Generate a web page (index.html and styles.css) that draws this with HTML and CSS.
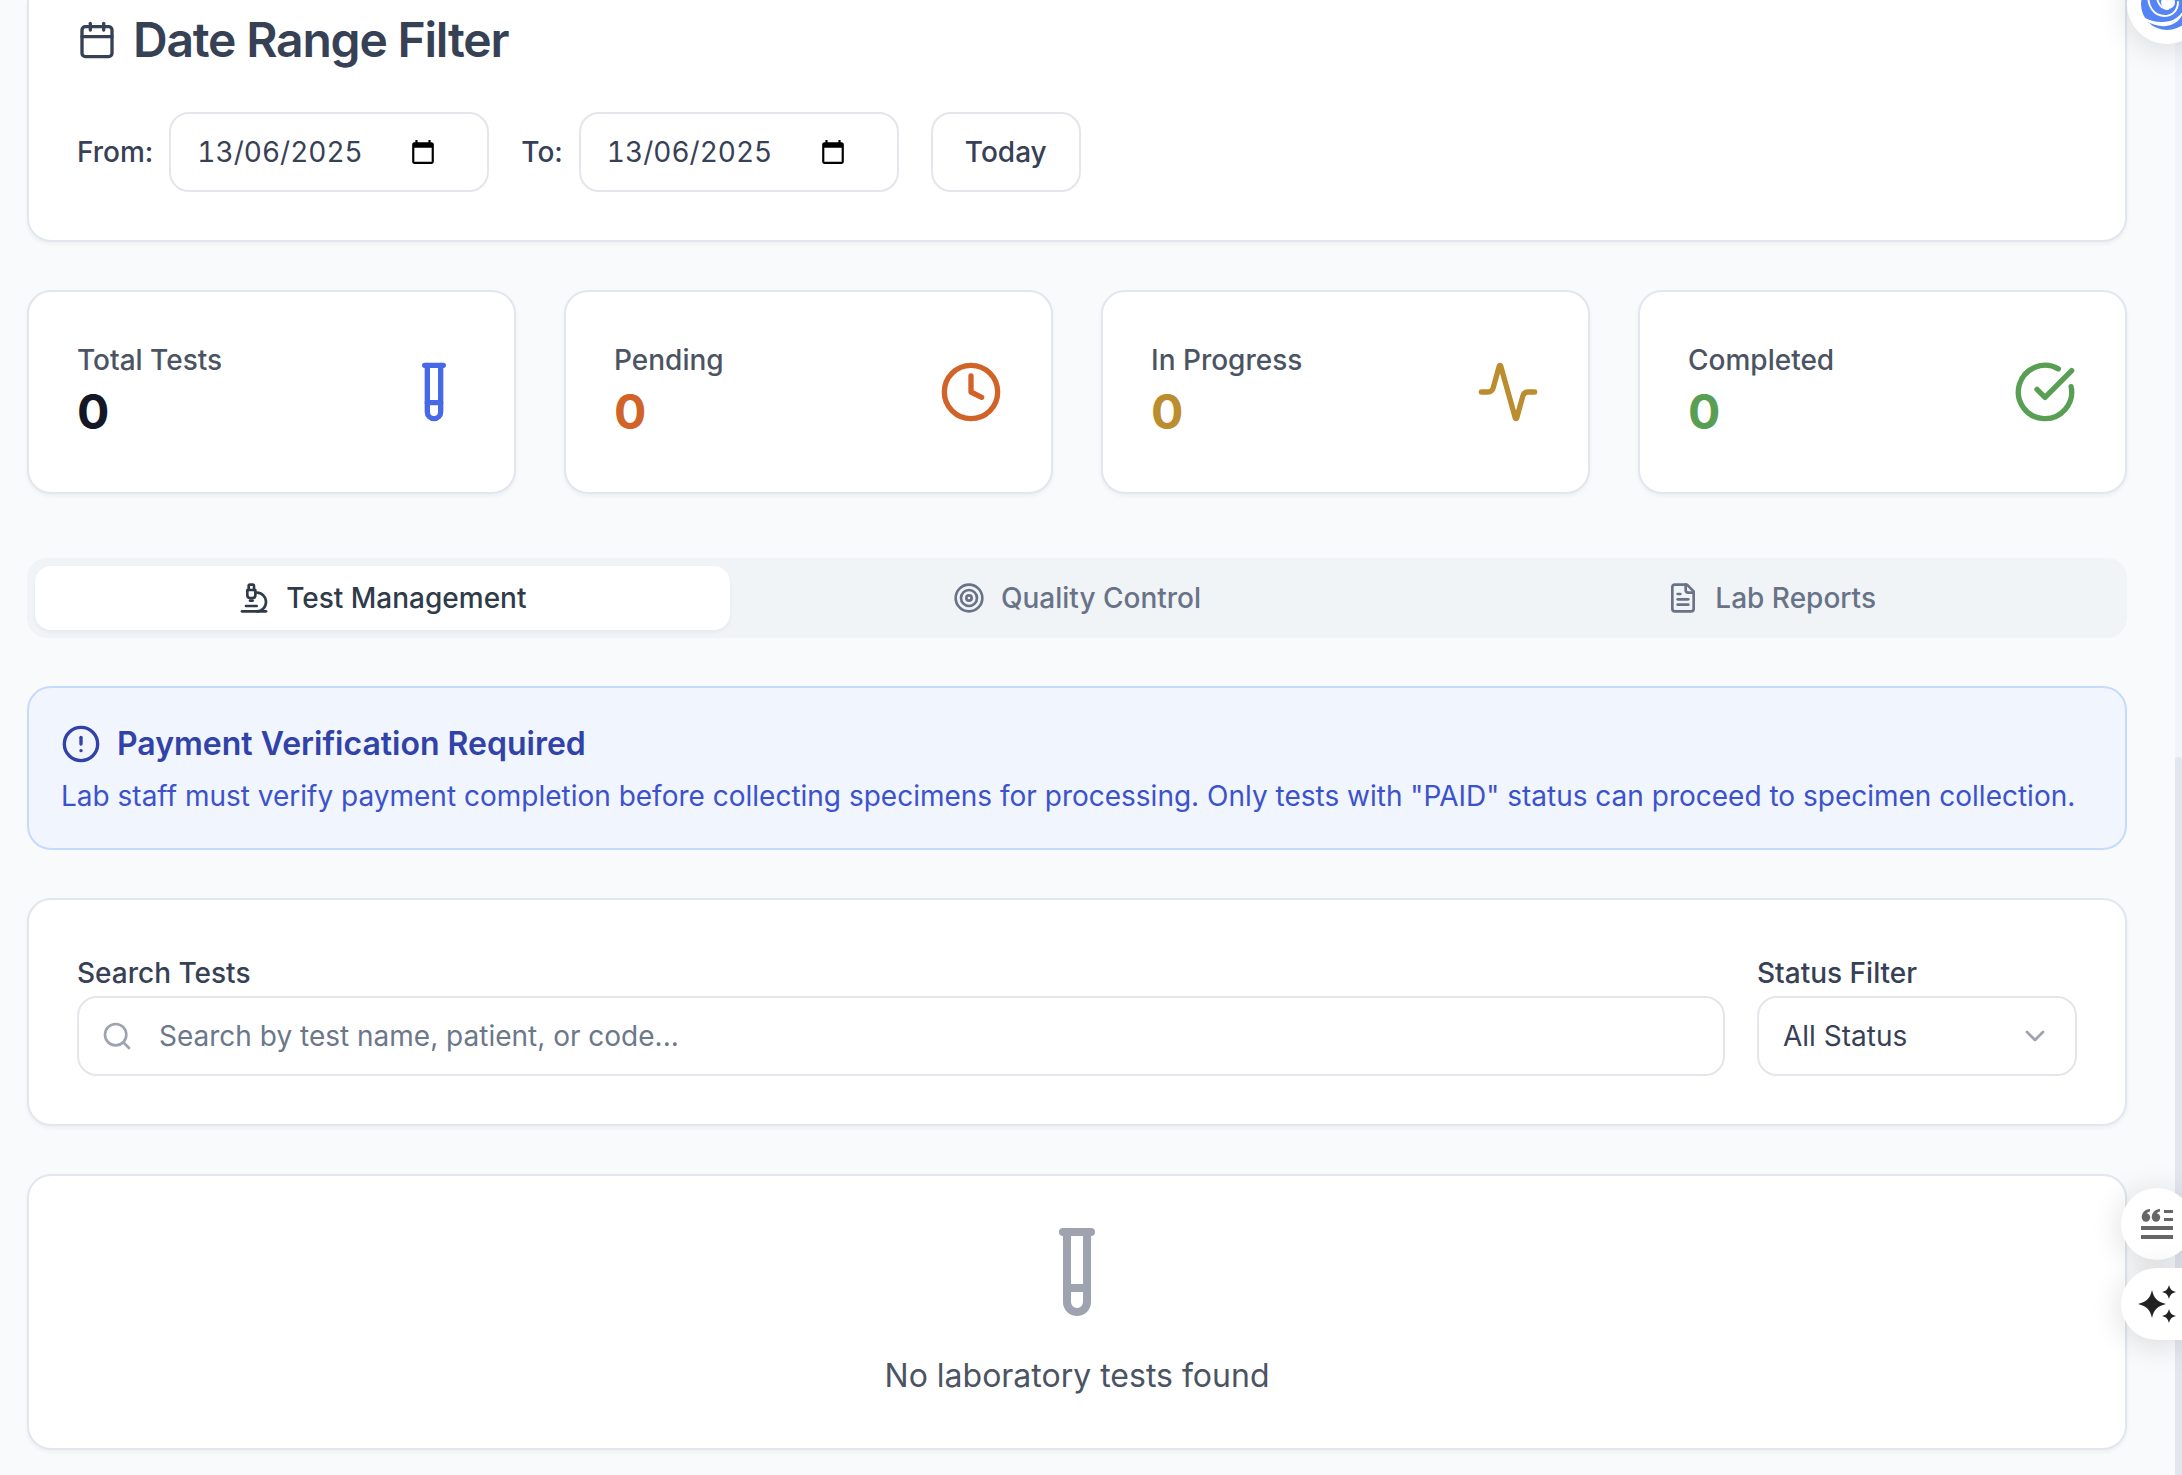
FILE: index.html
```html
<!DOCTYPE html>
<html lang="en-GB">
<head>
<meta charset="utf-8">
<meta name="viewport" content="width=device-width, initial-scale=1">
<title>Laboratory</title>
<link rel="stylesheet" href="styles.css">
</head>
<body>
<svg class="sprite" aria-hidden="true">
  <symbol id="tube" viewBox="0 0 24 24"><path d="M14.5 2v17.5c0 1.4-1.1 2.5-2.5 2.5s-2.5-1.1-2.5-2.5V2"/><path d="M8.5 2h7"/><path d="M14.5 16h-5"/></symbol>
  <symbol id="picker" viewBox="0 0 24 24"><path d="M20 3h-1V1h-2v2H7V1H5v2H4c-1.1 0-2 .9-2 2v16c0 1.1.9 2 2 2h16c1.100 0 2-.9 2-2V5c0-1.100-.9-2-2-2zm0 18H4V8h16v13z"/></symbol>
</svg>

<main class="page">
  <section class="card card-filter">
    <h2 class="card-title">
      <svg class="icon icon-lg" viewBox="0 0 24 24"><path d="M8 2v4"/><path d="M16 2v4"/><rect x="3" y="4" width="18" height="18" rx="2"/><path d="M3 10h18"/></svg>
      Date Range Filter
    </h2>
    <div class="filter-row">
      <div class="field-inline">
        <label for="from">From:</label>
        <div class="control control-date">
          <input id="from" type="text" inputmode="numeric" value="13/06/2025">
          <button type="button" class="picker" aria-label="Open calendar"><svg viewBox="0 0 24 24"><use href="#picker"/></svg></button>
        </div>
      </div>
      <div class="field-inline">
        <label for="to">To:</label>
        <div class="control control-date">
          <input id="to" type="text" inputmode="numeric" value="13/06/2025">
          <button type="button" class="picker" aria-label="Open calendar"><svg viewBox="0 0 24 24"><use href="#picker"/></svg></button>
        </div>
      </div>
      <button type="button" class="button">Today</button>
    </div>
  </section>

  <section class="stats">
    <article class="card stat">
      <div><p class="stat-label">Total Tests</p><p class="stat-value">0</p></div>
      <svg class="icon icon-xl blue" viewBox="0 0 24 24"><use href="#tube"/></svg>
    </article>
    <article class="card stat">
      <div><p class="stat-label">Pending</p><p class="stat-value orange">0</p></div>
      <svg class="icon icon-xl orange" viewBox="0 0 24 24"><circle cx="12" cy="12" r="10"/><path d="M12 6v6l4 2"/></svg>
    </article>
    <article class="card stat">
      <div><p class="stat-label">In Progress</p><p class="stat-value yellow">0</p></div>
      <svg class="icon icon-xl yellow" viewBox="0 0 24 24"><path d="M22 12h-2.480a2 2 0 0 0-1.930 1.460l-2.350 8.360a.25.25 0 0 1-.48 0L9.240 2.180a.25.25 0 0 0-.48 0l-2.350 8.360A2 2 0 0 1 4.490 12H2"/></svg>
    </article>
    <article class="card stat">
      <div><p class="stat-label">Completed</p><p class="stat-value green">0</p></div>
      <svg class="icon icon-xl green" viewBox="0 0 24 24"><path d="M21.801 10A10 10 0 1 1 17 3.335"/><path d="m9 11 3 3L22 4"/></svg>
    </article>
  </section>

  <div class="tabs" role="tablist">
    <button type="button" class="tab tab-active" role="tab" aria-selected="true">
      <svg class="icon" viewBox="0 0 24 24"><path d="M6 18h8"/><path d="M3 22h18"/><path d="M14 22a7 7 0 1 0 0-14h-1"/><path d="M9 14h2"/><path d="M9 12a2 2 0 0 1-2-2V6h6v4a2 2 0 0 1-2 2Z"/><path d="M12 6V3a1 1 0 0 0-1-1H9a1 1 0 0 0-1 1v3"/></svg>
      Test Management
    </button>
    <button type="button" class="tab" role="tab" aria-selected="false">
      <svg class="icon" viewBox="0 0 24 24"><circle cx="12" cy="12" r="10"/><circle cx="12" cy="12" r="6"/><circle cx="12" cy="12" r="2"/></svg>
      Quality Control
    </button>
    <button type="button" class="tab" role="tab" aria-selected="false">
      <svg class="icon" viewBox="0 0 24 24"><path d="M15 2H6a2 2 0 0 0-2 2v16a2 2 0 0 0 2 2h12a2 2 0 0 0 2-2V7Z"/><path d="M14 2v4a2 2 0 0 0 2 2h4"/><path d="M10 9H8"/><path d="M16 13H8"/><path d="M16 17H8"/></svg>
      Lab Reports
    </button>
  </div>

  <section class="notice">
    <h3 class="notice-title">
      <svg class="icon icon-lg" viewBox="0 0 24 24"><circle cx="12" cy="12" r="10"/><path d="M12 8v4"/><path d="M12 16h.01"/></svg>
      Payment Verification Required
    </h3>
    <p class="notice-text">Lab staff must verify payment completion before collecting specimens for processing. Only tests with "PAID" status can proceed to specimen collection.</p>
  </section>

  <section class="card search">
    <div class="field field-grow">
      <label for="search">Search Tests</label>
      <div class="control control-search">
        <svg class="icon muted" viewBox="0 0 24 24"><circle cx="11" cy="11" r="8"/><path d="m21 21-4.300-4.300"/></svg>
        <input id="search" type="text" placeholder="Search by test name, patient, or code...">
      </div>
    </div>
    <div class="field">
      <label for="status">Status Filter</label>
      <div class="control control-select">
        <select id="status"><option>All Status</option></select>
        <svg class="icon muted" viewBox="0 0 24 24"><path d="m6 9 6 6 6-6"/></svg>
      </div>
    </div>
  </section>

  <section class="card empty">
    <svg class="icon icon-2xl muted" viewBox="0 0 24 24"><use href="#tube"/></svg>
    <p class="empty-text">No laboratory tests found</p>
  </section>
</main>

<div class="rail" aria-hidden="true"><div class="rail-thumb"></div></div>

<button type="button" class="float float-assistant" aria-label="Assistant">
  <svg viewBox="0 0 52 52">
    <circle cx="26" cy="26" r="26" fill="#5585f5"/>
    <circle cx="27" cy="24" r="7" fill="#fff"/>
    <g fill="none" stroke="#fff" stroke-linecap="round">
      <path stroke-width="2" d="M7 16C7 28 12 37 23 38c8 0 14-5 14-14"/>
      <path stroke-width="2" d="M16 17c0 8 4 14 11 14"/>
    </g>
    <path fill="#fff" d="M0 41l5 2c9 5 19 7 27 3 6-3 10-8 11-15-3 6-8 10-14 12-9 2-17 1-25-3l-4-3z"/>
  </svg>
</button>
<button type="button" class="float float-quote" aria-label="Quote">
  <svg viewBox="0 0 32 30" fill="#666">
    <circle cx="5" cy="8.500" r="4.200"/><circle cx="15" cy="8.500" r="4.200"/>
    <path d="M.8 8.500C.8 3.500 4 .3 9 0v2.500C6.500 3 5 4.500 5 6zM10.800 8.500C10.800 3.500 14 .3 19 0v2.500c-2.500.5-4 2-4 3.500z"/>
    <path d="M23 1h9v3h-9zM23 9h9v3h-9zM0 17h32v4H0zM0 26h32v4H0z"/>
  </svg>
</button>
<button type="button" class="float float-spark" aria-label="Suggestions">
  <svg viewBox="0 0 38 38" fill="#222">
    <path d="M14 5c2 8.500 5 11.500 14 14-9 2.500-12 5.500-14 14-2-8.500-5-11.500-14-14 9-2.500 12-5.500 14-14z"/>
    <path d="M31 0c1.200 4.400 2.600 5.800 7 7-4.400 1.200-5.800 2.600-7 7-1.200-4.400-2.600-5.800-7-7 4.400-1.200 5.800-2.600 7-7z"/>
    <path d="M31 24c1.200 4.400 2.600 5.800 7 7-4.400 1.200-5.800 2.600-7 7-1.200-4.400-2.600-5.800-7-7 4.400-1.200 5.800-2.600 7-7z"/>
  </svg>
</button>
</body>
</html>
```

FILE: styles.css
```css
* { box-sizing: border-box; margin: 0; }

body {
  background: #f9fafc;
  color: #374155;
  font-family: Inter, "Liberation Sans", sans-serif;
  font-optical-sizing: none;
  font-size: 28px;
  line-height: 40px;
  overflow: hidden;
}

button, input, select {
  font: inherit;
  color: inherit;
  background: none;
  border: 0;
  padding: 0;
  outline: 0;
}

.sprite { position: absolute; width: 0; height: 0; }

.page {
  display: flex;
  flex-direction: column;
  gap: 48px;
  padding: 0 55px 24px 27px;
}

.card {
  background: #fff;
  border: 2px solid #e1e6ef;
  border-radius: 24px;
  padding: 48px;
  box-shadow: 0 2px 4px rgba(0, 0, 0, .05);
}

/* The first card is scrolled partly out of view. */
.card-filter {
  border-top: 0;
  border-radius: 0 0 24px 24px;
  padding-top: 16px;
}

.card-title {
  display: flex;
  align-items: center;
  gap: 16px;
  font-size: 48px;
  font-weight: 600;
  line-height: 48px;
  letter-spacing: -0.025em;
  margin-bottom: 48px;
}

.icon {
  flex: none;
  width: 32px;
  height: 32px;
  fill: none;
  stroke: currentColor;
  stroke-width: 2;
  stroke-linecap: round;
  stroke-linejoin: round;
}
.icon-lg { width: 40px; height: 40px; }
.icon-xl { width: 64px; height: 64px; }
.icon-2xl { width: 96px; height: 96px; }

.blue { color: #4869e5; }
.orange { color: #d16329; }
.yellow { color: #bb8d2e; }
.green { color: #589f54; }
.muted { color: #9fa3af; }

label { font-weight: 500; }

.filter-row { display: flex; align-items: center; gap: 32px; }
.field-inline { display: flex; align-items: center; gap: 16px; }

.control {
  display: flex;
  align-items: center;
  height: 80px;
  border: 2px solid #e5e6eb;
  border-radius: 20px;
  background: #fff;
  padding: 0 24px;
}
.control input, .control select { flex: 1; min-width: 0; height: 100%; }

.control-date {
  width: 320px;
  padding: 0 51px 0 26px;
  font-variant-numeric: tabular-nums;
}
.control-date input { font-variant-numeric: tabular-nums; }
.picker { width: 26px; height: 26px; }
.picker svg { display: block; width: 26px; height: 26px; fill: #000; }

.button {
  height: 80px;
  padding: 0 32px;
  border: 2px solid #e5e6eb;
  border-radius: 20px;
  background: #fff;
  font-weight: 500;
}

.stats {
  display: grid;
  grid-template-columns: repeat(4, 1fr);
  gap: 48px;
  margin-bottom: 16px;
}
.stat { display: flex; align-items: center; justify-content: space-between; }
.stat-label { font-weight: 500; color: #4b5462; }
.stat-value { font-size: 48px; font-weight: 700; line-height: 64px; }
.stat-value:not(.orange):not(.yellow):not(.green) { color: #131726; }

.tabs {
  display: grid;
  grid-template-columns: repeat(3, 1fr);
  padding: 8px;
  border-radius: 20px;
  background: #f1f4f7;
}
.tab {
  display: flex;
  align-items: center;
  justify-content: center;
  gap: 16px;
  height: 64px;
  border-radius: 16px;
  font-weight: 500;
  color: #687387;
}
.tab-active {
  background: #fff;
  color: #303b49;
  box-shadow: 0 2px 4px rgba(0, 0, 0, .05);
}

.notice {
  background: #f0f5fe;
  border: 2px solid #c6dbfb;
  border-radius: 24px;
  padding: 32px;
}
.notice-title {
  display: flex;
  align-items: center;
  gap: 16px;
  font-size: 32px;
  font-weight: 600;
  line-height: 48px;
  color: #3142a8;
  margin-bottom: 8px;
}
.notice-text { color: #3c52cc; }

.search { display: flex; gap: 32px; }
.field { width: 320px; }
.field-grow { flex: 1; }
.field label { display: block; line-height: 46px; padding-top: 2px; }
.control-search { gap: 26px; padding-left: 22px; }
.control-search input::placeholder { color: #6c778a; opacity: 1; }
.control-select select { appearance: none; }

.empty { display: flex; flex-direction: column; align-items: center; gap: 32px; }
.empty-text { font-size: 32px; line-height: 48px; color: #4b5462; }

/* Page scroll track */
.rail {
  position: fixed;
  top: 0;
  right: 0;
  bottom: 0;
  width: 7px;
  padding-top: 757px;
  background: #f1f4f8;
}
.rail-thumb { height: 100%; border-radius: 4px 4px 0 0; background: #e1e6ef; }

/* Floating helpers on the window edge */
.float {
  position: fixed;
  display: flex;
  align-items: center;
  background: #fff;
  box-shadow: 0 4px 32px rgba(0, 0, 0, .14);
}
.float-assistant {
  top: -36px;
  right: -25px;
  width: 80px;
  height: 80px;
  padding-left: 14px;
  border-radius: 50%;
}
.float-assistant svg { flex: none; width: 52px; height: 52px; }
.float-quote {
  top: 1188px;
  right: -11px;
  width: 72px;
  height: 72px;
  padding-left: 20px;
  border-radius: 50%;
}
.float-quote svg { flex: none; width: 32px; height: 30px; }
.float-spark {
  top: 1268px;
  right: 0;
  width: 61px;
  height: 72px;
  padding-left: 17px;
  border-radius: 36px 0 0 36px;
}
.float-spark svg { flex: none; width: 38px; height: 38px; }
```
